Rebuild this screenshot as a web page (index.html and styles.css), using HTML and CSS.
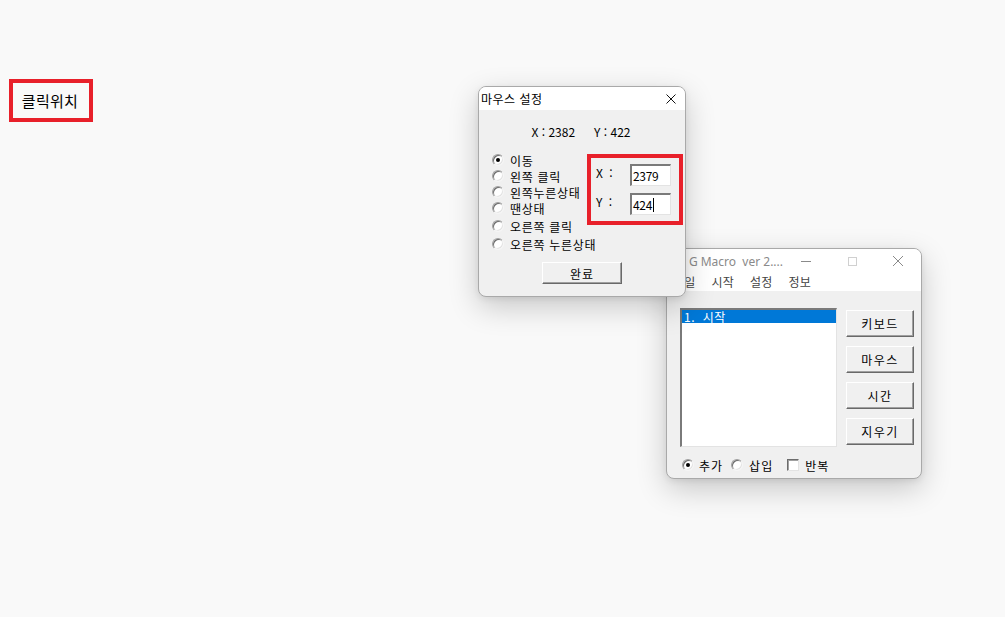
FILE: index.html
```html
<!DOCTYPE html>
<html lang="ko">
<head>
    <meta charset="UTF-8">
    <title>G Macro</title>
    <link rel="stylesheet" href="styles.css">
</head>
<body>
    <div class="desktop">
        <div class="click-label">클릭위치</div>

        <div class="window macro-win">
            <div class="titlebar">
                <span class="app-icon"></span>
                <span class="title">G Macro&nbsp; ver 2....</span>
                <div class="caption">
                    <span class="cap-btn"><span class="cap-min"></span></span>
                    <span class="cap-btn"><span class="cap-max"></span></span>
                    <span class="cap-btn">
                        <svg width="12" height="12" viewBox="0 0 12 12"><path d="M1 1 L11 11 M11 1 L1 11" stroke="#8a8a8a" stroke-width="1" fill="none"/></svg>
                    </span>
                </div>
            </div>
            <div class="menubar">
                <span class="menu-item">파일</span>
                <span class="menu-item">시작</span>
                <span class="menu-item">설정</span>
                <span class="menu-item">정보</span>
            </div>
            <div class="macro-body">
                <div class="macro-top">
                    <div class="listbox">
                        <div class="list-item selected">1.&nbsp;&nbsp;시작</div>
                    </div>
                    <div class="side-buttons">
                        <div class="btn side-btn">키보드</div>
                        <div class="btn side-btn">마우스</div>
                        <div class="btn side-btn">시간</div>
                        <div class="btn side-btn">지우기</div>
                    </div>
                </div>
                <div class="option-row">
                    <span class="radio checked"></span><span class="opt-text">추가</span>
                    <span class="radio"></span><span class="opt-text opt-insert">삽입</span>
                    <span class="checkbox"></span><span class="opt-text opt-repeat">반복</span>
                </div>
            </div>
        </div>

        <div class="window mouse-dlg">
            <div class="titlebar">
                <span class="title dlg-title">마우스 설정</span>
                <svg class="dlg-close" width="10" height="10" viewBox="0 0 10 10"><path d="M0.5 0.5 L9.5 9.5 M9.5 0.5 L0.5 9.5" stroke="#111" stroke-width="1" fill="none"/></svg>
            </div>
            <div class="dlg-body">
                <div class="coords"><span>X : 2382</span><span>Y : 422</span></div>
                <div class="main-row">
                    <div class="radio-list">
                        <div class="radio-row"><span class="radio checked"></span>이동</div>
                        <div class="radio-row"><span class="radio"></span>왼쪽 클릭</div>
                        <div class="radio-row"><span class="radio"></span>왼쪽누른상태</div>
                        <div class="radio-row"><span class="radio"></span>땐상태</div>
                        <div class="radio-row spaced"><span class="radio"></span>오른쪽 클릭</div>
                        <div class="radio-row spaced"><span class="radio"></span>오른쪽 누른상태</div>
                    </div>
                    <div class="pos-box">
                        <div class="pos-row"><span class="pos-label">X :</span><div class="edit">2379</div></div>
                        <div class="pos-row"><span class="pos-label">Y :</span><div class="edit">424<span class="caret"></span></div></div>
                    </div>
                </div>
                <div class="btn-row"><div class="btn done-btn">완료</div></div>
            </div>
        </div>
    </div>
</body>
</html>
```

FILE: styles.css
```css
body {
    margin: 0;
    padding: 0;
    background-color: #f9f9f9;
    font-family: "Noto Sans CJK KR", "Noto Sans", sans-serif;
    color: #000;
}
.desktop {
    position: relative;
    width: 1005px;
    height: 617px;
    overflow: hidden;
}
.click-label {
    position: absolute;
    left: 9px;
    top: 79px;
    width: 84px;
    height: 43px;
    box-sizing: border-box;
    border: 4px solid #e8202a;
    display: flex;
    align-items: center;
    justify-content: center;
    font-size: 15px;
    letter-spacing: 0.3px;
    padding-right: 2px;
}

/* windows */
.window {
    position: absolute;
    box-sizing: border-box;
    border: 1px solid #a9a9a9;
    border-radius: 8px;
    overflow: hidden;
    background: #f0f0f0;
    box-shadow: 0 10px 30px rgba(0, 0, 0, 0.2), 0 2px 6px rgba(0, 0, 0, 0.08);
    display: flex;
    flex-direction: column;
}
.titlebar {
    background: #fff;
    display: flex;
    align-items: center;
    flex-shrink: 0;
}
.title {
    font-size: 12px;
    white-space: nowrap;
}

/* mouse settings dialog */
.mouse-dlg {
    left: 478px;
    top: 86px;
    width: 208px;
    height: 211px;
    z-index: 2;
}
.mouse-dlg .titlebar {
    height: 23px;
    padding: 0 9px 0 2px;
    justify-content: space-between;
}
.dlg-title {
    letter-spacing: 0.5px;
}
.dlg-body {
    flex: 1;
    padding-top: 14px;
}
.coords {
    display: flex;
    justify-content: center;
    gap: 19px;
    font-size: 12px;
    line-height: 16px;
    padding-right: 2px;
}
.main-row {
    display: flex;
    margin-top: 12px;
    padding-left: 13px;
}
.radio-list {
    width: 95px;
    flex-shrink: 0;
    white-space: nowrap;
}
.radio-row {
    display: flex;
    align-items: center;
    height: 16px;
    font-size: 12px;
    letter-spacing: 0.7px;
}
.radio-row.spaced {
    margin-top: 2px;
}
.radio-row .radio {
    margin-right: 6px;
}
.pos-box {
    position: relative;
    z-index: 1;
    margin-top: 2px;
    width: 96px;
    height: 71px;
    box-sizing: border-box;
    border: 4px solid #e8202a;
    padding: 6px 0 0 5px;
    display: flex;
    flex-direction: column;
    gap: 7px;
    background: #f0f0f0;
}
.pos-row {
    display: flex;
    align-items: flex-start;
}
.pos-label {
    width: 34px;
    font-size: 12px;
    line-height: 16px;
    padding-top: 1px;
    word-spacing: 3px;
}
.edit {
    width: 41px;
    height: 22px;
    box-sizing: border-box;
    background: #fff;
    border-top: 2px solid #7a7a7a;
    border-left: 2px solid #7a7a7a;
    border-right: 1px solid #e3e3e3;
    border-bottom: 1px solid #e3e3e3;
    font-size: 12px;
    line-height: 18px;
    padding-left: 1px;
    letter-spacing: -0.3px;
    display: flex;
    align-items: center;
}
.caret {
    display: inline-block;
    width: 1px;
    height: 14px;
    background: #000;
    margin-left: 1px;
}
.btn-row {
    display: flex;
    justify-content: center;
    margin-top: 10px;
}

/* classic buttons */
.btn {
    box-sizing: border-box;
    background: #f0f0f0;
    border-top: 1px solid #fff;
    border-left: 1px solid #fff;
    border-right: 1px solid #696969;
    border-bottom: 1px solid #696969;
    box-shadow: inset -1px -1px #a0a0a0;
    display: flex;
    align-items: center;
    justify-content: center;
    font-size: 12px;
    letter-spacing: 1px;
}
.done-btn {
    width: 80px;
    height: 22px;
}

/* radios and checkbox */
.radio {
    display: inline-block;
    width: 12px;
    height: 12px;
    box-sizing: border-box;
    border-radius: 50%;
    background: #fff;
    border: 1px solid;
    border-color: #a0a0a0 #f4f4f4 #f4f4f4 #a0a0a0;
    box-shadow: inset 1px 1px #6c6c6c, inset -1px -1px #e3e3e3;
    position: relative;
    flex-shrink: 0;
}
.radio.checked::after {
    content: "";
    position: absolute;
    left: 3px;
    top: 3px;
    width: 4px;
    height: 4px;
    border-radius: 50%;
    background: #000;
}
.checkbox {
    display: inline-block;
    width: 12px;
    height: 12px;
    box-sizing: border-box;
    background: #fff;
    border-top: 1px solid #6c6c6c;
    border-left: 1px solid #6c6c6c;
    border-right: 1px solid #e3e3e3;
    border-bottom: 1px solid #e3e3e3;
    box-shadow: inset 1px 1px #a0a0a0;
    flex-shrink: 0;
}

/* macro main window */
.macro-win {
    left: 666px;
    top: 248px;
    width: 256px;
    height: 231px;
    z-index: 1;
}
.macro-win .titlebar {
    height: 24px;
}
.app-icon {
    width: 14px;
    height: 14px;
    margin: 0 9px 0 6px;
    background: #6b8fd0;
    border-radius: 2px;
}
.macro-win .title {
    color: #8a8a8a;
    font-family: "Noto Sans", sans-serif;
    flex: 1;
}
.caption {
    display: flex;
    height: 100%;
}
.cap-btn {
    width: 46px;
    height: 100%;
    display: flex;
    align-items: center;
    justify-content: center;
}
.cap-min {
    width: 10px;
    height: 1px;
    background: #8a8a8a;
}
.cap-max {
    width: 9px;
    height: 9px;
    box-sizing: border-box;
    border: 1px solid #d0d0d0;
}
.menubar {
    background: #fff;
    height: 18px;
    display: flex;
    align-items: center;
    flex-shrink: 0;
}
.menu-item {
    font-size: 12px;
    color: #444;
    padding: 0 8px;
    letter-spacing: 0.2px;
    line-height: 18px;
}
.menu-item:first-child {
    margin-left: -2px;
}
.macro-body {
    flex: 1;
    padding: 17px 0 0 13px;
}
.macro-top {
    display: flex;
    gap: 9px;
}
.listbox {
    width: 157px;
    height: 139px;
    box-sizing: border-box;
    background: #fff;
    border-top: 2px solid #7a7a7a;
    border-left: 2px solid #7a7a7a;
    border-right: 1px solid #e3e3e3;
    border-bottom: 1px solid #e3e3e3;
}
.list-item {
    height: 13px;
    font-size: 12px;
    line-height: 13px;
    padding-left: 2px;
    letter-spacing: 0.5px;
    white-space: nowrap;
}
.list-item.selected {
    background: #0078d7;
    color: #fff;
}
.side-buttons {
    display: flex;
    flex-direction: column;
    gap: 9px;
    padding-top: 2px;
}
.side-btn {
    width: 68px;
    height: 27px;
    letter-spacing: 1.5px;
}
.option-row {
    display: flex;
    align-items: center;
    height: 16px;
    margin-top: 10px;
    padding-left: 2px;
    font-size: 12px;
    letter-spacing: 1px;
}
.opt-text {
    margin-left: 5px;
    margin-right: 8px;
}
.opt-insert {
    margin-left: 6px;
    margin-right: 14px;
}
.opt-repeat {
    margin-left: 6px;
}
```
